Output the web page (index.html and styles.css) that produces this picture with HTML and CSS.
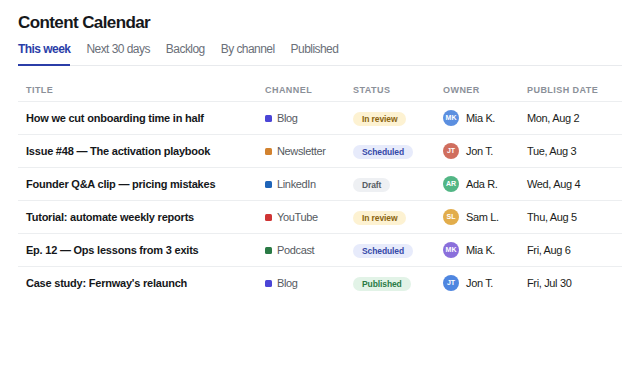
FILE: index.html
```html
<!DOCTYPE html>
<html lang="en">
<head>
<meta charset="utf-8">
<title>Content Calendar</title>
<link rel="stylesheet" href="styles.css">
</head>
<body>
<div class="page">
  <h1 class="title">Content Calendar</h1>
  <nav class="tabs">
    <a class="tab active">This week</a>
    <a class="tab">Next 30 days</a>
    <a class="tab">Backlog</a>
    <a class="tab">By channel</a>
    <a class="tab">Published</a>
  </nav>
  <table class="grid">
    <colgroup>
      <col class="c-title"><col class="c-channel"><col class="c-status"><col class="c-owner"><col class="c-date">
    </colgroup>
    <thead>
      <tr><th>Title</th><th>Channel</th><th>Status</th><th>Owner</th><th>Publish date</th></tr>
    </thead>
    <tbody>
      <tr>
        <td class="t">How we cut onboarding time in half</td>
        <td><span class="ch"><i class="dot blog"></i>Blog</span></td>
        <td><span class="badge review">In review</span></td>
        <td><span class="own"><span class="av blue">MK</span>Mia K.</span></td>
        <td>Mon, Aug 2</td>
      </tr>
      <tr>
        <td class="t">Issue #48 — The activation playbook</td>
        <td><span class="ch"><i class="dot news"></i>Newsletter</span></td>
        <td><span class="badge sched">Scheduled</span></td>
        <td><span class="own"><span class="av red">JT</span>Jon T.</span></td>
        <td>Tue, Aug 3</td>
      </tr>
      <tr>
        <td class="t">Founder Q&amp;A clip — pricing mistakes</td>
        <td><span class="ch"><i class="dot li"></i>LinkedIn</span></td>
        <td><span class="badge draft">Draft</span></td>
        <td><span class="own"><span class="av green">AR</span>Ada R.</span></td>
        <td>Wed, Aug 4</td>
      </tr>
      <tr>
        <td class="t">Tutorial: automate weekly reports</td>
        <td><span class="ch"><i class="dot yt"></i>YouTube</span></td>
        <td><span class="badge review">In review</span></td>
        <td><span class="own"><span class="av amber">SL</span>Sam L.</span></td>
        <td>Thu, Aug 5</td>
      </tr>
      <tr>
        <td class="t">Ep. 12 — Ops lessons from 3 exits</td>
        <td><span class="ch"><i class="dot pod"></i>Podcast</span></td>
        <td><span class="badge sched">Scheduled</span></td>
        <td><span class="own"><span class="av purple">MK</span>Mia K.</span></td>
        <td>Fri, Aug 6</td>
      </tr>
      <tr>
        <td class="t">Case study: Fernway's relaunch</td>
        <td><span class="ch"><i class="dot blog"></i>Blog</span></td>
        <td><span class="badge pub">Published</span></td>
        <td><span class="own"><span class="av blue2">JT</span>Jon T.</span></td>
        <td>Fri, Jul 30</td>
      </tr>
    </tbody>
  </table>
</div>
</body>
</html>
```
FILE: styles.css
```css
* { box-sizing: border-box; }
html, body { margin: 0; padding: 0; background: #fff; }
body {
  font-family: "Liberation Sans", Arial, sans-serif;
  color: #15171a;
}
.page { padding: 13px 18px 0; }
.title {
  margin: 0;
  font-size: 17px;
  font-weight: 700;
  letter-spacing: -0.6px;
  line-height: 20px;
  color: #16181b;
}
.tabs {
  display: flex;
  gap: 16px;
  margin-top: 4px;
  border-bottom: 1px solid #e8eaed;
}
.tab {
  font-size: 12px;
  line-height: 16px;
  padding: 4px 0 7px;
  color: #6b7079;
  letter-spacing: -0.55px;
  border-bottom: 2px solid transparent;
  margin-bottom: -1px;
}
.tab.active {
  color: #2b3ea8;
  font-weight: 700;
  border-bottom-color: #2b3ea8;
}
.grid {
  width: 100%;
  border-collapse: collapse;
}
.c-title { width: 239px; }
.c-channel { width: 88px; }
.c-status { width: 90px; }
.c-owner { width: 84px; }
.c-date { width: 103px; }
.grid th {
  text-align: left;
  font-size: 9px;
  font-weight: 700;
  text-transform: uppercase;
  letter-spacing: 0.45px;
  color: #8b9099;
  padding: 19px 8px 6px;
  line-height: 10px;
  border-bottom: 1px solid #eceef0;
}
.grid td {
  font-size: 11px;
  line-height: 16px;
  padding: 0 8px;
  height: 33px;
  vertical-align: middle;
  color: #1b1d20;
  letter-spacing: -0.35px;
  border-bottom: 1px solid #eceef0;
  white-space: nowrap;
}
.grid tbody tr:last-child td { border-bottom: none; }
.grid td.t { font-weight: 700; letter-spacing: -0.22px; color: #15171a; }
.ch { display: flex; align-items: center; gap: 5px; color: #555a61; }
.dot { display: block; width: 7px; height: 7px; border-radius: 1.5px; flex: none; }
.dot.blog { background: #4b45d6; }
.dot.news { background: #d2822f; }
.dot.li { background: #1f64b8; }
.dot.yt { background: #cf3434; }
.dot.pod { background: #2a7a45; }
.badge {
  display: inline-block;
  vertical-align: middle;
  font-size: 8.5px;
  font-weight: 700;
  line-height: 14px;
  letter-spacing: -0.1px;
  padding: 0 9px;
  border-radius: 7px;
}
.badge.review { background: #fdf2d2; color: #8a6410; }
.badge.sched { background: #e7ebfb; color: #3548a8; }
.badge.draft { background: #eef0f3; color: #575c64; }
.badge.pub { background: #e2f3e7; color: #2a7a45; }
.own { display: flex; align-items: center; gap: 7px; }
.av {
  width: 16px; height: 16px; border-radius: 50%; flex: none;
  display: flex; align-items: center; justify-content: center;
  color: #fff; font-size: 7px; font-weight: 700; letter-spacing: 0;
}
.av.blue { background: #5b8fe0; }
.av.red { background: #d06e5e; }
.av.green { background: #52b685; }
.av.amber { background: #e2ad4b; }
.av.purple { background: #8a6fdb; }
.av.blue2 { background: #4f86e0; }
```
